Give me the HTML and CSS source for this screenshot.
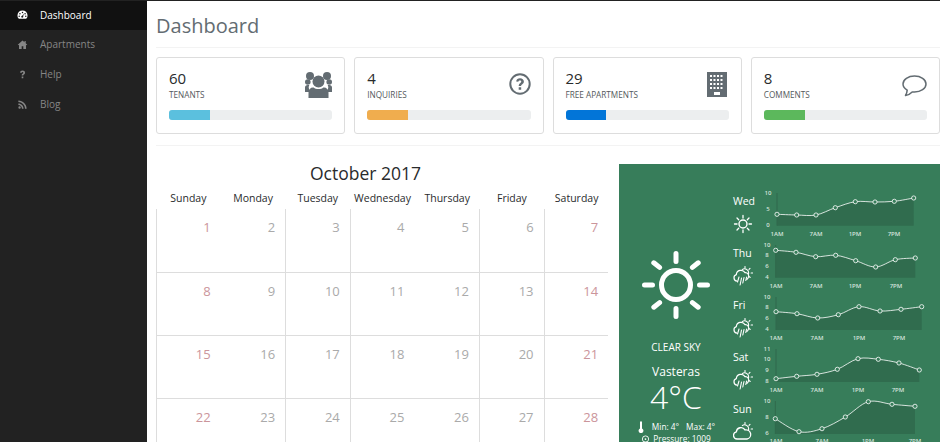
FILE: index.html
```html
<!DOCTYPE html>
<html lang="en">
<head>
<meta charset="utf-8">
<title>Dashboard</title>
<link rel="stylesheet" href="styles.css">
</head>
<body>
<svg class="sprite" aria-hidden="true">
  <symbol id="w-sun" viewBox="0 0 20 20">
    <circle cx="10" cy="10" r="4" fill="none" stroke="#fff" stroke-width="1.4"/>
    <path d="M10 1.5v2.5M10 16v2.5M1.5 10H4M16 10h2.5M4 4l1.7 1.7M14.3 14.3L16 16M4 16l1.7-1.7M14.3 5.7L16 4" stroke="#fff" stroke-width="1.3" stroke-linecap="round"/>
  </symbol>
  <symbol id="w-storm" viewBox="0 0 20 20">
    <path d="M12 0.5v1.6M17 2.3l-1 1.1M19.8 7h-1.7M17.2 11.5l-1-.9" stroke="#fff" stroke-width="1.1" stroke-linecap="round"/>
    <path d="M9 3.9a4 4 0 0 1 6.7 3.1 4 4 0 0 1-1 2.6" fill="none" stroke="#fff" stroke-width="1.1"/>
    <path d="M4 15.2a3.4 3.4 0 0 1-.7-6.6 4.7 4.7 0 0 1 8.7-2 3.4 3.4 0 0 1 3.2 5.2c-.3.8-1 1.5-1.8 1.8" fill="#377d5a" stroke="#fff" stroke-width="1.2"/>
    <path d="M6 11l-1.500 5M8.500 12l-1.400 7M11 11.500l-1.200 5.500M13.600 11l-.8 3.500" stroke="#fff" stroke-width="1.1" stroke-linecap="round"/>
  </symbol>
  <symbol id="w-cloud" viewBox="0 0 20 20">
    <path d="M12 0.5v1.6M17 2.3l-1 1.1M19.8 7h-1.7M17.2 11.5l-1-.9" stroke="#fff" stroke-width="1.1" stroke-linecap="round"/>
    <path d="M9 3.9a4 4 0 0 1 6.7 3.1 4 4 0 0 1-1 2.6" fill="none" stroke="#fff" stroke-width="1.1"/>
    <path d="M4 17a3.6 3.6 0 0 1-.7-7.1 4.7 4.7 0 0 1 8.7-2 3.6 3.6 0 0 1 2 9.1z" fill="#377d5a" stroke="#fff" stroke-width="1.3"/>
  </symbol>
</svg>

<div class="app">
  <nav class="sidebar">
    <a class="nav-item active">
      <svg class="nav-icon" viewBox="0 0 12 12"><path fill-rule="evenodd" d="M6 1.500a5.500 5.500 0 0 1 5.500 5.500c0 1.400-.4 2.400-1 3.200-.2.200-.4.300-.7.300H2.200c-.3 0-.5-.1-.7-.3C.9 9.400.5 8.400.5 7A5.500 5.500 0 0 1 6 1.500zM6 3a.8.800 0 1 0 0 1.600A.8.800 0 0 0 6 3zM3.200 4.300a.8.800 0 1 0 0 1.600.8.800 0 0 0 0-1.600zm5.600 0a.8.800 0 1 0 0 1.600.8.800 0 0 0 0-1.600zM2.400 7.100a.8.800 0 1 0 0 1.600.8.800 0 0 0 0-1.600zm7.200 0a.8.800 0 1 0 0 1.600.8.800 0 0 0 0-1.600zM7.500 4.800L5.700 7.300a1.100 1.100 0 1 0 1 .5z"/></svg>
      <span>Dashboard</span>
    </a>
    <a class="nav-item">
      <svg class="nav-icon" viewBox="0 0 12 12"><path d="M6 1.500L.8 6.300l.6.600.8-.7V11h2.900V7.800h1.800V11h2.900V6.200l.8.700.6-.6L9.500 4.700V2.300H8.200v1.200z"/></svg>
      <span>Apartments</span>
    </a>
    <a class="nav-item">
      <svg class="nav-icon" viewBox="0 0 12 12"><path d="M3.300 3.900C3.500 2.500 4.500 1.700 6 1.700c1.600 0 2.800.9 2.800 2.300 0 1-.5 1.500-1.200 2-.5.300-.7.600-.7 1.100H5.100c0-1 .3-1.500 1-2 .5-.3.800-.6.800-1 0-.5-.4-.7-.9-.7-.6 0-1 .3-1.100 1zM5.100 8.200h1.800v1.800H5.100z"/></svg>
      <span>Help</span>
    </a>
    <a class="nav-item">
      <svg class="nav-icon" viewBox="0 0 12 12"><path d="M1.500 1.500v1.800c3.900 0 7.200 3.300 7.200 7.200h1.800c0-4.900-4.100-9-9-9zm0 3.300v1.800c2.100 0 3.900 1.800 3.900 3.900h1.800c0-3.100-2.600-5.700-5.700-5.700zM2.800 8a1.300 1.300 0 1 0 0 2.600 1.300 1.300 0 0 0 0-2.600z"/></svg>
      <span>Blog</span>
    </a>
  </nav>

  <main class="main">
    <h1 class="page-title">Dashboard</h1>

    <section class="stats">
      <article class="card">
        <div class="card-head">
          <div>
            <div class="stat-num">60</div>
            <div class="stat-label">TENANTS</div>
          </div>
          <svg class="stat-icon icon-users" viewBox="0 0 27 27"><circle cx="5" cy="5" r="4"/><circle cx="22" cy="5" r="4"/><circle cx="2.800" cy="11" r="2.800"/><circle cx="24.200" cy="11" r="2.800"/><circle cx="13.500" cy="10.500" r="6"/><path d="M0 21v-4.500c0-1.500 1-2.500 2.800-2.500h1.500a5 5 0 0 0 .7 5.500v1.500zM27 21v-4.500c0-1.500-1-2.500-2.800-2.500h-1.500a5 5 0 0 1-.7 5.500v1.500z"/><path d="M3.500 27v-5.500c0-3 2-5 4.500-5h.7c1 .9 2.800 1.600 4.800 1.600s3.800-.7 4.800-1.600h.7c2.500 0 4.500 2 4.500 5V27z"/></svg>
        </div>
        <div class="bar"><div class="fill fill-info"></div></div>
      </article>
      <article class="card">
        <div class="card-head">
          <div>
            <div class="stat-num">4</div>
            <div class="stat-label">INQUIRIES</div>
          </div>
          <svg class="stat-icon icon-help" viewBox="0 0 22 22"><circle cx="11" cy="11" r="9.700" fill="none" stroke="#636c72" stroke-width="2"/><path d="M7.200 8.400C7.400 6.300 9 5.300 11 5.300c2.200 0 3.900 1.300 3.900 3.200 0 1.400-.8 2.200-1.800 2.900-.8.500-1 .9-1 1.700H9.700c0-1.500.4-2.200 1.400-2.900.8-.5 1.200-1 1.200-1.600 0-.8-.6-1.200-1.400-1.200-.9 0-1.400.5-1.600 1.300zM9.700 14.300h2.500v2.500H9.700z"/></svg>
        </div>
        <div class="bar"><div class="fill fill-warn"></div></div>
      </article>
      <article class="card">
        <div class="card-head">
          <div>
            <div class="stat-num">29</div>
            <div class="stat-label">FREE APARTMENTS</div>
          </div>
          <svg class="stat-icon icon-building" viewBox="0 0 20 25"><path fill-rule="evenodd" d="M0 0h20v25H0zM3 3v2h2V3zm3.500 0v2h2V3zM10 3v2h2V3zm3.500 0v2h2V3zM3 7v2h2V7zm3.500 0v2h2V7zM10 7v2h2V7zm3.500 0v2h2V7zM3 11v2h2v-2zm3.500 0v2h2v-2zM10 11v2h2v-2zm3.500 0v2h2v-2zM3 15v2h2v-2zm3.500 0v2h2v-2zM10 15v2h2v-2zm3.500 0v2h2v-2zM7 20v3h6v-3z"/></svg>
        </div>
        <div class="bar"><div class="fill fill-primary"></div></div>
      </article>
      <article class="card">
        <div class="card-head">
          <div>
            <div class="stat-num">8</div>
            <div class="stat-label">COMMENTS</div>
          </div>
          <svg class="stat-icon icon-comment" viewBox="0 0 25 22"><path d="M12.500 1C6.200 1 1 4.500 1 9c0 2.600 1.700 4.700 4.200 6.100-.1 1.800-.7 3.700-1.700 5.400 2.600-.4 5-1.700 6.700-3.500.7.100 1.500.100 2.300.100 6.300 0 11.500-3.600 11.500-8.100S18.800 1 12.500 1z" fill="none" stroke="#636c72" stroke-width="1.500" stroke-linejoin="round"/></svg>
        </div>
        <div class="bar"><div class="fill fill-success"></div></div>
      </article>
    </section>

    <hr class="divider">

    <section class="content">
      <div class="calendar">
        <h2 class="cal-title">October 2017</h2>
        <div class="cal-head">
          <div>Sunday</div><div>Monday</div><div>Tuesday</div><div>Wednesday</div><div>Thursday</div><div>Friday</div><div>Saturday</div>
        </div>
        <div class="cal-grid">
          <div class="day weekend">1</div><div class="day">2</div><div class="day">3</div><div class="day">4</div><div class="day">5</div><div class="day">6</div><div class="day weekend">7</div>
          <div class="day weekend">8</div><div class="day">9</div><div class="day">10</div><div class="day">11</div><div class="day">12</div><div class="day">13</div><div class="day weekend">14</div>
          <div class="day weekend">15</div><div class="day">16</div><div class="day">17</div><div class="day">18</div><div class="day">19</div><div class="day">20</div><div class="day weekend">21</div>
          <div class="day weekend">22</div><div class="day">23</div><div class="day">24</div><div class="day">25</div><div class="day">26</div><div class="day">27</div><div class="day weekend">28</div>
        </div>
      </div>

      <aside class="weather">
        <div class="now">
          <svg class="now-sun" viewBox="0 0 70 70"><circle cx="35" cy="35" r="14.500" fill="none" stroke="#fff" stroke-width="5"/><path d="M35 3.500v8M35 58.500v8M3.500 35h8M58.500 35h8M12.800 12.800l5.800 4.600M51.400 52.600l5.800 4.600M12.800 57.200l5.800-4.600M51.400 17.400l5.800-4.600" stroke="#fff" stroke-width="5" stroke-linecap="round"/></svg>
          <div class="now-sky">CLEAR SKY</div>
          <div class="now-city">Vasteras</div>
          <div class="now-temp">4°C</div>
          <div class="now-line">
            <svg class="thermo" viewBox="0 0 8 12"><path d="M3 .5h2v7a2.400 2.400 0 1 1-2 0z" fill="#fff"/></svg>
            <span>Min: 4°</span><span>Max: 4°</span>
          </div>
          <div class="now-line">
            <svg class="pin" viewBox="0 0 10 10"><circle cx="5" cy="4.500" r="3.500" fill="none" stroke="#fff"/><path d="M3 7.500L5 10l2-2.500" fill="#fff"/><circle cx="5" cy="4.500" r="1" fill="#fff"/></svg>
            <span>Pressure: 1009</span>
          </div>
        </div>

        <div class="days">
          <div class="day-row">
            <div class="day-info"><div class="day-name">Wed</div><svg class="day-icon"><use href="#w-sun"/></svg></div>
            <svg class="chart" data-chart="wed" viewBox="0 0 172 52"></svg>
          </div>
          <div class="day-row">
            <div class="day-info"><div class="day-name">Thu</div><svg class="day-icon"><use href="#w-storm"/></svg></div>
            <svg class="chart" data-chart="thu" viewBox="0 0 172 52"></svg>
          </div>
          <div class="day-row">
            <div class="day-info"><div class="day-name">Fri</div><svg class="day-icon"><use href="#w-storm"/></svg></div>
            <svg class="chart" data-chart="fri" viewBox="0 0 172 52"></svg>
          </div>
          <div class="day-row">
            <div class="day-info"><div class="day-name">Sat</div><svg class="day-icon"><use href="#w-storm"/></svg></div>
            <svg class="chart" data-chart="sat" viewBox="0 0 172 52"></svg>
          </div>
          <div class="day-row">
            <div class="day-info"><div class="day-name">Sun</div><svg class="day-icon"><use href="#w-cloud"/></svg></div>
            <svg class="chart" data-chart="sun" viewBox="0 0 172 52"></svg>
          </div>
        </div>
      </aside>
    </section>
  </main>
</div>
<script src="charts.js"></script>
</body>
</html>
```

FILE: styles.css
```css
* { box-sizing: border-box; }
html, body { margin: 0; height: 100%; overflow: hidden; }
body {
  font-family: "Open Sans", "Liberation Sans", sans-serif;
  background: #fff;
  color: #292b2c;
  border-top: 1px solid #222;
}
.sprite { display: none; }
.app { display: flex; height: 441px; }

.sidebar { width: 147px; flex: none; background: #222; }
.nav-item {
  display: flex;
  align-items: center;
  height: 30px;
  padding: 0 0 2px 17px;
  font-size: 10px;
  color: #868686;
  fill: #868686;
}
.nav-item.active { background: #111; color: #fff; fill: #fff; height: 29px; }
.nav-icon { width: 11px; height: 11px; margin-right: 12px; flex: none; }

.main { flex: 1; min-width: 0; display: flex; flex-direction: column; padding-left: 9px; }
.page-title {
  margin: 0;
  height: 47px;
  line-height: 50px;
  font-size: 20px;
  font-weight: 400;
  color: #636c72;
  border-bottom: 1px solid #f3f3f3;
}
.stats { display: flex; gap: 9px; margin-top: 9px; }
.card {
  flex: 1 1 0;
  height: 77px;
  padding: 11px 12px 0;
  border: 1px solid #ddd;
  border-radius: 3px;
}
.card-head { display: flex; justify-content: space-between; height: 41px; }
.stat-num { font-size: 15px; line-height: 18px; color: #292b2c; }
.stat-label { margin-top: 1px; font-size: 8.2px; line-height: 13px; color: #55595c; }
.stat-icon { fill: #636c72; flex: none; }
.icon-users { width: 27px; height: 27px; margin-top: 2px; }
.icon-help { width: 22px; height: 22px; margin-top: 4px; }
.icon-building { width: 20px; height: 25px; margin: 3px 2px 0 0; }
.icon-comment { width: 25px; height: 22px; margin-top: 6px; }
.bar { height: 10px; border-radius: 3px; background: #eceeef; overflow: hidden; }
.fill { width: 25%; height: 100%; }
.fill-info { background: #5bc0de; }
.fill-warn { background: #f0ad4e; }
.fill-primary { background: #0275d8; }
.fill-success { background: #5cb85c; }

.divider { width: 100%; margin: 11px 0 18px; border: 0; border-top: 1px solid #f3f3f3; }

.content { flex: 1; min-height: 0; display: flex; gap: 10px; }

.calendar { width: 453px; flex: none; }
.cal-title { margin: 0; padding-right: 34px; font-size: 17.5px; line-height: 18px; font-weight: 400; text-align: center; color: #292b2c; }
.cal-head {
  display: grid;
  grid-template-columns: repeat(7, 1fr);
  margin-top: 6px;
  height: 21px;
  line-height: 21px;
  font-size: 10.5px;
  text-align: center;
  color: #292b2c;
}
.cal-grid { display: grid; grid-template-columns: repeat(7, 64.6px); grid-template-rows: 64px; grid-auto-rows: 63px; }
.day {
  padding: 11px 10px 0 0;
  text-align: right;
  font-size: 13px;
  line-height: 15px;
  color: #aaa;
  border-bottom: 1px solid #ddd;
}
.day.weekend { color: #cb959b; }
.day:nth-child(7n+1), .day:nth-child(7n+3), .day:nth-child(7n+4), .day:nth-child(7n+6), .day:nth-child(7n) { border-left: 1px solid #ddd; }

.weather { flex: 1; min-width: 0; display: flex; background: #377d5a; color: #fff; }
.now { width: 114px; flex: none; display: flex; flex-direction: column; align-items: center; padding-top: 86px; }
.now-sun { width: 70px; height: 70px; flex: none; }
.now-sky { margin-top: 20px; font-size: 10px; line-height: 14px; }
.now-city { margin-top: 11px; font-size: 12px; line-height: 14px; }
.now-temp { font-size: 32px; line-height: 36px; font-weight: 300; }
.now-line { display: flex; align-items: center; justify-content: center; gap: 7px; height: 12px; font-size: 8.3px; line-height: 12px; white-space: nowrap; flex: none; }
.now-temp + .now-line { margin-top: 6px; }
.thermo { width: 8px; height: 12px; }
.pin { width: 9px; height: 9px; margin-right: -4px; }

.days { flex: 1; padding-top: 22px; }
.day-row { display: flex; height: 52px; }
.day-info { width: 25px; flex: none; padding-top: 8px; }
.day-name { font-size: 10.5px; line-height: 14px; }
.day-icon { display: block; width: 20px; height: 20px; margin-top: 6px; }
.chart { width: 172px; height: 52px; flex: none; overflow: visible; }
.chart-area { fill: #306c4e; stroke: none; }
.chart-axis { stroke: #30694c; stroke-width: 1; }
.chart-line { fill: none; stroke: #fff; stroke-width: 0.8; }
.chart-dot { fill: #377d5a; stroke: #fff; stroke-width: 0.8; }
.chart-label { font-family: "Open Sans", sans-serif; font-size: 6px; font-weight: 600; fill: #d4e2da; text-anchor: middle; }
```

FILE: charts.js
```js
// Forecast curves, in page-pixel positions relative to the 758,186+52n chart box.
var CHARTS = {
  wed: { top: 186, bottom: 225.7,
    pts: [[777,214.3],[796.7,215],[816,215],[835.3,207.7],[855.3,201.7],[875,202],[894.3,201.3],[913.7,198]],
    y: [["10",193],["5",209],["0",225]], x: [["1AM",777],["7AM",816],["1PM",855],["7PM",894]], lx: 768, ly: 234 },
  thu: { top: 238, bottom: 277.7,
    pts: [[775.7,250.3],[796,252.3],[815.7,256.7],[835.7,255.3],[855.7,260.7],[875.7,267],[895.3,259.7],[915.3,258]],
    y: [["10",245],["8",255],["6",266],["4",277]], x: [["1AM",776],["7AM",816],["1PM",855],["7PM",896]], lx: 767, ly: 286 },
  fri: { top: 290, bottom: 330,
    pts: [[776,311.7],[797,313.7],[817.7,318],[838.3,314.7],[859,306.7],[880,311],[901,309.3],[921.7,306.7]],
    y: [["10",297],["8",307],["6",318],["4",329]], x: [["1AM",776],["7AM",817],["1PM",859],["7PM",899]], lx: 767, ly: 338 },
  sat: { top: 342, bottom: 382,
    pts: [[776,378.7],[796.7,376.3],[817,374.3],[837.3,369.3],[858,358.7],[878.3,359.3],[899,363],[919.3,370]],
    y: [["11",349],["10",359],["9",370],["8",381]], x: [["1AM",776],["7AM",817],["1PM",858],["7PM",898]], lx: 767, ly: 390 },
  sun: { top: 394, bottom: 434,
    pts: [[775.3,418.7],[799,431.7],[822,428.7],[845.3,417],[868.3,401.7],[892,404.3],[915,406.3]],
    y: [["10",401],["8",417],["6",433]], x: [["1AM",776],["7AM",822],["1PM",868],["7PM",915]], lx: 767, ly: 441 }
};

var NS = "http://www.w3.org/2000/svg";
var LEFT = 758;

function el(parent, name, attrs, text) {
  var n = document.createElementNS(NS, name);
  for (var k in attrs) n.setAttribute(k, attrs[k]);
  if (text) n.textContent = text;
  parent.appendChild(n);
  return n;
}

function curve(p) {
  var d = "M" + p[0][0] + " " + p[0][1];
  for (var i = 0; i < p.length - 1; i++) {
    var a = p[i - 1] || p[i], b = p[i], c = p[i + 1], e = p[i + 2] || c;
    d += "C" + (b[0] + (c[0] - a[0]) / 6).toFixed(2) + " " + (b[1] + (c[1] - a[1]) / 6).toFixed(2) +
         " " + (c[0] - (e[0] - b[0]) / 6).toFixed(2) + " " + (c[1] - (e[1] - b[1]) / 6).toFixed(2) +
         " " + c[0] + " " + c[1];
  }
  return d;
}

document.querySelectorAll("[data-chart]").forEach(function (svg) {
  var c = CHARTS[svg.getAttribute("data-chart")];
  var pts = c.pts.map(function (p) { return [+(p[0] - LEFT).toFixed(1), +(p[1] - c.top).toFixed(1)]; });
  var base = c.bottom - c.top;
  var line = curve(pts);
  var first = pts[0], last = pts[pts.length - 1];
  el(svg, "path", { "class": "chart-area", d: line + "L" + last[0] + " " + base + "L" + first[0] + " " + base + "Z" });
  el(svg, "path", { "class": "chart-axis", d: "M" + first[0] + " " + (c.y[0][1] - c.top) + "V" + base });
  el(svg, "path", { "class": "chart-line", d: line });
  pts.forEach(function (p) { el(svg, "circle", { "class": "chart-dot", cx: p[0], cy: p[1], r: 2.1 }); });
  c.y.forEach(function (t) { el(svg, "text", { "class": "chart-label", x: c.lx - LEFT, y: t[1] - c.top + 2 }, t[0]); });
  c.x.forEach(function (t) { el(svg, "text", { "class": "chart-label", x: t[1] - LEFT, y: c.ly - c.top + 2 }, t[0]); });
});
```
